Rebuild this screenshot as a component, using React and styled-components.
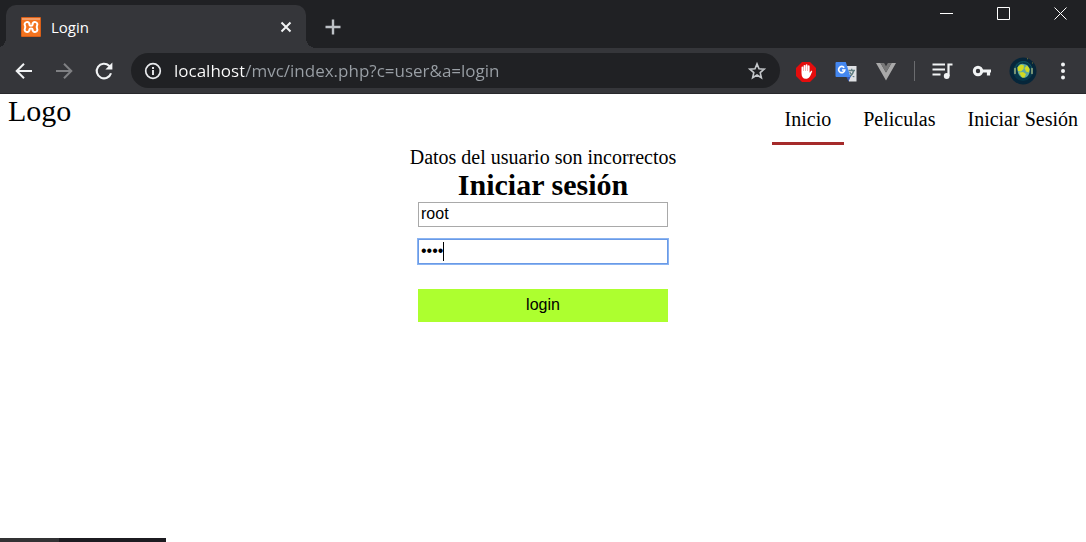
import React, { useState } from "react";
import styled, { createGlobalStyle, css } from "styled-components";

const GlobalStyle = createGlobalStyle`
  *, *::before, *::after { box-sizing: border-box; }
  body {
    margin: 0;
    background: #fff;
    color: #000;
    font-family: "Liberation Serif", "Times New Roman", serif;
    font-size: 20px;
  }
`;

const Window = styled.div`
  display: flex;
  flex-direction: column;
  min-height: 100vh;
`;

/* ---- browser frame ---- */

const uiFont = css`
  font-family: "Open Sans", "Segoe UI", sans-serif;
`;

const TabStrip = styled.header`
  display: flex;
  height: 48px;
  padding-left: 6px;
  background: #202124;
  ${uiFont}
`;

const Tab = styled.div`
  position: relative;
  display: flex;
  align-items: center;
  gap: 10px;
  width: 300px;
  margin-top: 5px;
  padding: 0 10px 0 15px;
  border-radius: 10px 10px 0 0;
  background: #35363a;
  color: #fff;
  font-size: 15px;

  &::before,
  &::after {
    content: "";
    position: absolute;
    bottom: 0;
    width: 10px;
    height: 10px;
  }
  &::before {
    right: 100%;
    background: radial-gradient(circle at 0 0, transparent 10px, #35363a 10px);
  }
  &::after {
    left: 100%;
    background: radial-gradient(circle at 100% 0, transparent 10px, #35363a 10px);
  }
`;

const TabTitle = styled.span`
  flex: 1;
`;

const IconButton = styled.button`
  display: grid;
  place-items: center;
  flex: none;
  width: ${({ $width }) => $width || 20}px;
  height: ${({ $height }) => $height || 20}px;
  padding: 0;
  border: 0;
  background: none;
  color: ${({ $color }) => $color || "#f1f3f4"};
`;

const NewTab = styled(IconButton)`
  align-self: center;
  margin: 5px 0 0 17px;
`;

const WindowControls = styled.div`
  display: flex;
  gap: 6px;
  margin-left: auto;
`;

const Toolbar = styled.div`
  display: flex;
  align-items: center;
  height: 46px;
  padding: 0 13px 0 14px;
  border-bottom: 1px solid #28292c;
  background: #35363a;
  ${uiFont}
`;

const NavButtons = styled.div`
  display: flex;
  gap: 20px;
`;

const AddressBar = styled.div`
  display: flex;
  flex: 1;
  align-items: center;
  gap: 11px;
  height: 35px;
  margin: 0 14px 0 17px;
  padding: 0 13px 0 12px;
  border-radius: 18px;
  background: #202124;
`;

const Address = styled.input`
  flex: 1;
  min-width: 0;
  padding: 0;
  border: 0;
  outline: 0;
  background: linear-gradient(90deg, #fff 70px, #9aa0a6 70px);
  background-clip: text;
  -webkit-background-clip: text;
  color: transparent;
  font-family: inherit;
  font-size: 17px;
  line-height: 24px;
`;

const Extensions = styled.div`
  display: flex;
  align-items: center;
  gap: 16px;
`;

const Separator = styled.span`
  width: 1px;
  height: 20px;
  background: #6b6c6f;
`;

/* ---- page ---- */

const SiteHeader = styled.div`
  display: flex;
  justify-content: space-between;
  height: 52px;
  padding: 0 8px;
`;

const Logo = styled.div`
  font-size: 30px;
  line-height: 34px;
`;

const SiteNav = styled.nav`
  display: flex;
  gap: 6px;
  margin-right: -13px;
`;

const NavLink = styled.a`
  height: 51px;
  padding: 0 13px;
  border-bottom: 3px solid ${({ $active }) => ($active ? "brown" : "transparent")};
  color: #000;
  line-height: 50px;
  text-decoration: none;
`;

const PageBody = styled.div`
  overflow-x: clip;
`;

const Main = styled.main`
  display: flex;
  flex: 1;
  flex-direction: column;
  align-items: center;
`;

const Message = styled.p`
  margin: 0;
  line-height: 22px;
`;

const Title = styled.h1`
  margin: 0;
  font-size: 30px;
  line-height: 34px;
`;

const LoginForm = styled.form`
  display: flex;
  flex-direction: column;
  width: 250px;
  gap: 12px;
`;

const Field = styled.label`
  position: relative;
  display: flex;
`;

const TextInput = styled.input`
  width: 100%;
  height: 25px;
  padding: 0 2px 2px;
  border: 1px solid #a9a9a9;
  outline: 0;
  background: #fff;
  color: #000;
  caret-color: transparent;
  font: 16px "Liberation Sans", Arial, sans-serif;

  ${({ $focused }) =>
    $focused &&
    css`
      border-color: #6a9ae6;
      box-shadow: 0 0 0 1px #8ab4f2;
    `}
`;

const Caret = styled.span`
  position: absolute;
  top: 3px;
  left: 25px;
  width: 1px;
  height: 19px;
  background: #000;
`;

const SubmitButton = styled.button`
  height: 33px;
  margin-top: 13px;
  padding: 0 0 2px;
  border: 0;
  background: greenyellow;
  color: #000;
  font: 16px "Liberation Sans", Arial, sans-serif;
`;

const BottomStrip = styled.footer`
  display: flex;
  height: 4px;
`;

const StripPart = styled.span`
  width: ${({ $width }) => $width}px;
  background: ${({ $color }) => $color};
`;

/* ---- drawings ---- */

const XamppIcon = () => (
  <svg width="20" height="20" viewBox="0 0 20 20" aria-hidden="true">
    <rect width="20" height="20" rx="1" fill="#d95f18" />
    <rect x="1" y="1" width="18" height="18" fill="#f4741f" />
    <rect x="1" y="1" width="18" height="2" fill="#f79d63" />
    <path
      d="M8.400 6.500C7.800 5.200 6.600 4.800 5.500 5.100 3.900 5.500 3.200 7 3.900 8.400c.5 1 .5 2.200 0 3.200-.7 1.400 0 2.900 1.600 3.300 1.100.3 2.300-.1 2.900-1.400M11.600 6.500c.6-1.300 1.800-1.700 2.900-1.400 1.600.4 2.300 1.900 1.600 3.300-.5 1-.5 2.200 0 3.200.7 1.400 0 2.900-1.600 3.300-1.100.3-2.300-.1-2.900-1.400M8.400 6.500v1.300q0 1 1.600 1t1.600-1V6.500M8.400 13.500v-1q0-1 1.600-1t1.600 1v1"
      fill="none" stroke="#fff" strokeWidth="2" strokeLinecap="round" strokeLinejoin="round"
    />
  </svg>
);

const CloseIcon = () => (
  <svg width="12" height="12" viewBox="0 0 12 12" aria-hidden="true">
    <path d="M1.500 1.500l9 9M10.500 1.500l-9 9" stroke="currentColor" strokeWidth="2" />
  </svg>
);

const PlusIcon = () => (
  <svg width="16" height="16" viewBox="0 0 16 16" aria-hidden="true">
    <path d="M8 .5v15M.5 8h15" stroke="currentColor" strokeWidth="2.400" />
  </svg>
);

const ArrowIcon = ({ forward }) => (
  <svg width="20" height="20" viewBox="0 0 20 20" aria-hidden="true">
    <path
      d={forward ? "M2 10h15M10 2.700L17.300 10 10 17.300" : "M18 10H3M10 2.700L2.700 10 10 17.300"}
      fill="none" stroke="currentColor" strokeWidth="2"
    />
  </svg>
);

const ReloadIcon = () => (
  <svg width="20" height="20" viewBox="0 0 20 20" aria-hidden="true">
    <path d="M17 12.200a7.300 7.300 0 1 1-1.900-7.400L17 6.600" fill="none" stroke="currentColor" strokeWidth="2.100" />
    <path d="M18.400 1.600v7h-7z" fill="currentColor" />
  </svg>
);

const InfoIcon = () => (
  <svg width="20" height="20" viewBox="0 0 20 20" aria-hidden="true">
    <circle cx="10" cy="10" r="7.300" fill="none" stroke="#e8eaed" strokeWidth="1.700" />
    <path d="M10 9v5M10 6v1.900" stroke="#e8eaed" strokeWidth="1.900" />
  </svg>
);

const StarIcon = () => (
  <svg width="20" height="20" viewBox="0 0 20 20" aria-hidden="true">
    <path
      d="M10 2.900l2 4.900 5.200.4-4 3.400 1.200 5.100-4.400-2.700-4.400 2.700 1.200-5.100-4-3.400 5.200-.4z"
      fill="none" stroke="currentColor" strokeWidth="1.600"
    />
  </svg>
);

const AdBlockIcon = () => (
  <svg width="22" height="22" viewBox="0 0 22 22" aria-hidden="true">
    <path d="M7 1h8l6 6v8l-6 6H7l-6-6V7z" fill="#e40d0d" />
    <path
      d="M6.500 12V6.500a.9.9 0 0 1 1.800 0V10h.3V4.800a.9.9 0 0 1 1.800 0V10h.3V4.200a.9.9 0 0 1 1.800 0V10h.3V5.200a.9.9 0 0 1 1.800 0v6.600l1.200-1.600c.6-.8 1.700-.3 1.300.6-1 2.200-1.600 3.900-2.600 5.200-.8 1-1.900 1.800-3.700 1.800-2.900 0-4.300-2-4.300-5.800z"
      fill="#fff"
    />
  </svg>
);

const TranslateIcon = () => (
  <svg width="22" height="22" viewBox="0 0 22 22" aria-hidden="true">
    <path d="M10 5h11.500v15.500H14z" fill="#dfe1e4" />
    <path d="M13.500 9.500h6.500M16.700 7.800v1.700M18.700 9.500c-.6 3-2.500 5.200-4.500 6.300M14.700 11c1 2.300 2.600 4 4.600 5" fill="none" stroke="#607d80" strokeWidth="1.300" />
    <path d="M11 15h5l-2.500 5.500z" fill="#3459b8" />
    <path d="M1.500 1h9.300L15.500 16H1.500a1 1 0 0 1-1-1V2a1 1 0 0 1 1-1z" fill="#4487f0" />
    <path d="M9.200 6.700A3.100 3.100 0 1 0 9.800 9H7" fill="none" stroke="#fff" strokeWidth="1.700" />
  </svg>
);

const VueIcon = () => (
  <svg width="22" height="22" viewBox="0 0 22 22" aria-hidden="true">
    <path d="M1 2h4.500L11 11.500 16.500 2H21L11 19.500z" fill="#a9a9a9" />
    <path d="M5.500 2h3.600L11 5.300 12.900 2h3.600L11 11.500z" fill="#777" />
  </svg>
);

const PlaylistIcon = () => (
  <svg width="22" height="20" viewBox="0 0 22 20" aria-hidden="true">
    <path d="M1.500 3.500H14M1.500 8.500H14M1.500 13.500H9.500" stroke="currentColor" strokeWidth="2" />
    <path d="M17.500 15V3.500h4" fill="none" stroke="currentColor" strokeWidth="2.200" />
    <circle cx="15.700" cy="15" r="2.900" fill="currentColor" />
  </svg>
);

const KeyIcon = () => (
  <svg width="20" height="14" viewBox="0 0 20 14" aria-hidden="true">
    <circle cx="7" cy="7" r="3.700" fill="none" stroke="currentColor" strokeWidth="3" />
    <path d="M10 7h10M17.500 7v4.500" stroke="currentColor" strokeWidth="3.200" />
  </svg>
);

const AvatarIcon = () => (
  <svg width="28" height="28" viewBox="0 0 28 28" aria-hidden="true">
    <circle cx="14" cy="14" r="13.500" fill="#06263a" />
    <circle cx="14" cy="14" r="10" fill="#07374a" />
    <path d="M6 13a8.500 8.500 0 0 1 17 0" fill="none" stroke="#0f5260" strokeWidth="1" />
    <path d="M8.500 10.500c1-3 3.500-3.800 6-3.600 3.500.1 6 2.600 6.200 6 .2 4-2.200 7.800-6.200 7.800-4-.2-6.500-5-6-10.200z" fill="#5fa9a0" />
    <path d="M8.500 10.200l3.500-2.700 3 1-.5 3.500-2.500 2.500-3-.5zM15.500 11l2.500-2.500 2.700 3.500-1 3.500-2.700-1zM10 15.500l4-.5 3 2-1.500 3.500h-2.500z" fill="#d3da22" />
    <path d="M6 11.500v5M23 11.500v5" stroke="#a9bd88" strokeWidth="1.400" strokeLinecap="round" />
    <path d="M18 2l1-.5M23 6h1" stroke="#7a7432" />
  </svg>
);

const MenuIcon = () => (
  <svg width="4" height="18" viewBox="0 0 4 18" aria-hidden="true">
    <circle cx="2" cy="2.500" r="2" fill="currentColor" />
    <circle cx="2" cy="9" r="2" fill="currentColor" />
    <circle cx="2" cy="15.500" r="2" fill="currentColor" />
  </svg>
);

const controls = [
  ["Minimizar", "M0 7.500h13"],
  ["Maximizar", "M.5 1.500h12v12H.5z"],
  ["Cerrar", "M.5 1.500l12 12M12.500 1.500l-12 12"],
];

const links = ["Inicio", "Peliculas", "Iniciar Sesión"];

export default function App() {
  const [address, setAddress] = useState("localhost/mvc/index.php?c=user&a=login");
  const [user, setUser] = useState("root");
  const [password, setPassword] = useState("root");

  return (
    <Window>
      <GlobalStyle />
      <TabStrip>
        <Tab>
          <XamppIcon />
          <TabTitle>Login</TabTitle>
          <IconButton aria-label="Cerrar pestaña"><CloseIcon /></IconButton>
        </Tab>
        <NewTab aria-label="Nueva pestaña" $color="#bdc1c6"><PlusIcon /></NewTab>
        <WindowControls>
          {controls.map(([name, d]) => (
            <IconButton key={name} aria-label={name} $width={51} $height={26}>
              <svg width="13" height="14" viewBox="0 0 13 14" aria-hidden="true">
                <path d={d} fill="none" stroke="#fff" />
              </svg>
            </IconButton>
          ))}
        </WindowControls>
      </TabStrip>

      <Toolbar>
        <NavButtons>
          <IconButton aria-label="Atrás"><ArrowIcon /></IconButton>
          <IconButton aria-label="Adelante" $color="#7f8083"><ArrowIcon forward /></IconButton>
          <IconButton aria-label="Recargar"><ReloadIcon /></IconButton>
        </NavButtons>
        <AddressBar>
          <InfoIcon />
          <Address aria-label="Dirección" value={address} onChange={(e) => setAddress(e.target.value)} />
          <IconButton aria-label="Marcador" $color="#c4c7ca"><StarIcon /></IconButton>
        </AddressBar>
        <Extensions>
          <IconButton aria-label="Bloqueador" $width={24}><AdBlockIcon /></IconButton>
          <IconButton aria-label="Traductor" $width={24}><TranslateIcon /></IconButton>
          <IconButton aria-label="Vue" $width={24}><VueIcon /></IconButton>
          <Separator />
          <IconButton aria-label="Lista" $width={22}><PlaylistIcon /></IconButton>
          <IconButton aria-label="Contraseñas" $width={24}><KeyIcon /></IconButton>
          <IconButton aria-label="Perfil" $width={28} $height={28}><AvatarIcon /></IconButton>
          <IconButton aria-label="Menú"><MenuIcon /></IconButton>
        </Extensions>
      </Toolbar>

      <PageBody>
        <SiteHeader>
          <Logo>Logo</Logo>
          <SiteNav>
            {links.map((text, i) => (
              <NavLink key={text} href="#" $active={i === 0}>{text}</NavLink>
            ))}
          </SiteNav>
        </SiteHeader>
      </PageBody>

      <Main>
        <Message>Datos del usuario son incorrectos</Message>
        <Title>Iniciar sesión</Title>
        <LoginForm onSubmit={(e) => e.preventDefault()}>
          <Field>
            <TextInput aria-label="Usuario" value={user} onChange={(e) => setUser(e.target.value)} />
          </Field>
          <Field>
            <TextInput
              $focused
              type="password"
              aria-label="Contraseña"
              value={password}
              onChange={(e) => setPassword(e.target.value)}
            />
            <Caret />
          </Field>
          <SubmitButton type="submit">login</SubmitButton>
        </LoginForm>
      </Main>

      <BottomStrip>
        <StripPart $width={59} $color="#323234" />
        <StripPart $width={107} $color="#1c1b20" />
      </BottomStrip>
    </Window>
  );
}
